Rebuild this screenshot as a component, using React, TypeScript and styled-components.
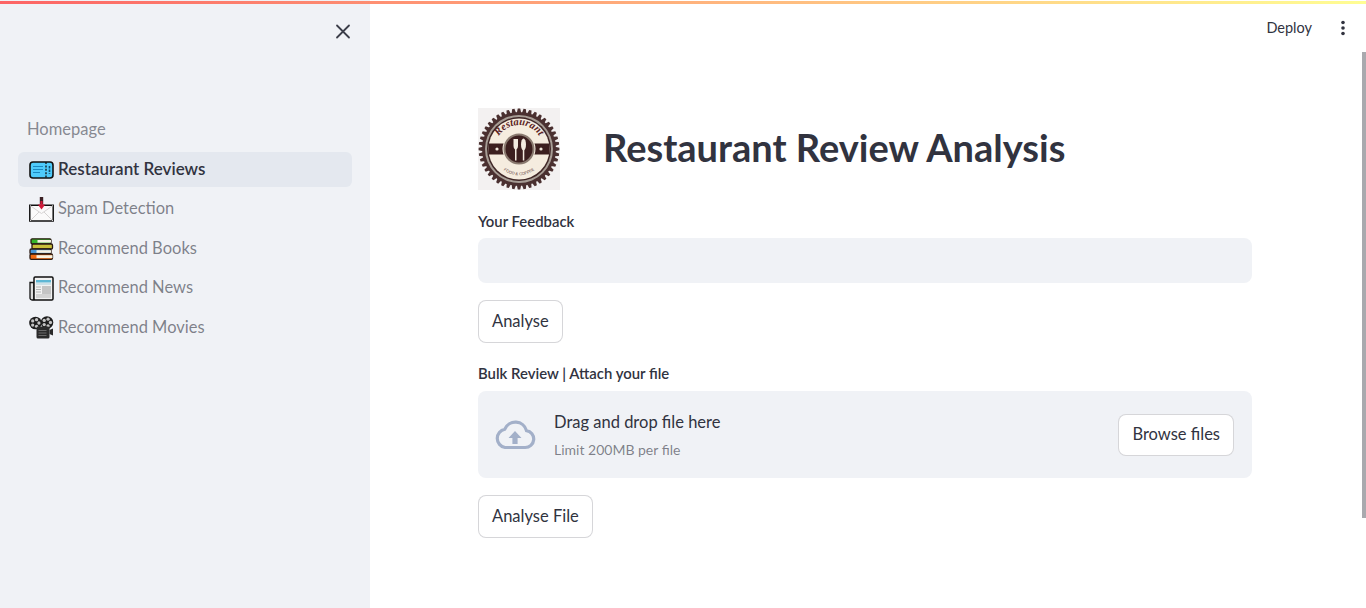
import React from "react";
import styled, { createGlobalStyle } from "styled-components";

const Global = createGlobalStyle`
  html, body { margin: 0; padding: 0; height: 100%; overflow: hidden; background: #fff; }
  * { box-sizing: border-box; }
  body { font-family: "Lato", "Noto Sans", "Liberation Sans", sans-serif; color: #31333f; }
`;

const Page = styled.div`
  position: relative;
  display: flex;
  width: 1366px;
  height: 608px;
  overflow: hidden;
`;
const Decoration = styled.div`
  position: absolute;
  top: 1px; left: 0; right: 0;
  height: 3px;
  z-index: 5;
  opacity: .85;
  background-image: linear-gradient(90deg, #ff4b4b, #fffd80);
`;
const Sidebar = styled.aside`
  flex: 0 0 370px;
  background: #f0f2f6;
  padding: 24px 18px 0;
  display: flex;
  flex-direction: column;
`;
const CloseRow = styled.div`
  display: flex;
  justify-content: flex-end;
  height: 93px;
`;
const CloseButton = styled.button`
  border: 0; background: none; padding: 0;
  width: 16px; height: 16px;
  margin-right: 1px;
  color: #3c3e4a;
  svg { display: block; }
`;
const NavTitle = styled.div`
  font-size: 16.5px;
  line-height: 24px;
  color: #31333f;
  opacity: .55;
  padding-left: 9px;
  margin-bottom: 11px;
`;
const Nav = styled.nav`
  display: flex;
  flex-direction: column;
  gap: 4.5px;
`;
const NavItem = styled.a<{ $active?: boolean }>`
  display: flex;
  align-items: center;
  gap: 3px;
  height: 35px;
  padding-left: 11px;
  border-radius: 6px;
  font-size: ${p => (p.$active ? "17px" : "16.5px")};
  font-weight: ${p => (p.$active ? 600 : 400)};
  color: ${p => (p.$active ? "#31333f" : "rgba(49,51,63,.6)")};
  background: ${p => (p.$active ? "#e4e8ef" : "transparent")};
  svg { flex: none; display: block; }
`;
const NavLabel = styled.span`
  position: relative;
  top: -1px;
  margin-left: 1px;
`;
const Main = styled.main`
  position: relative;
  flex: 1;
  display: flex;
  flex-direction: column;
`;
const Header = styled.header`
  display: flex;
  justify-content: flex-end;
  align-items: center;
  height: 56px;
  padding-right: 20px;
  gap: 28px;
  font-size: 14.5px;
  color: #31333f;
`;
const DeployLabel = styled.span`
  margin-top: -2px;
`;
const KebabIcon = styled.svg`
  display: block;
`;
const Scroll = styled.div`
  position: absolute;
  right: 0;
  top: 52px;
  width: 4px;
  height: 466px;
  background: #a9a9ae;
`;
const Content = styled.div`
  width: 774px;
  margin-left: 108px;
  padding-top: 52px;
  display: flex;
  flex-direction: column;
`;
const TitleRow = styled.div`
  display: flex;
  align-items: center;
  gap: 43px;
  margin-bottom: 22px;
`;
const Title = styled.h1`
  margin: 0 0 3px;
  font-size: 38px;
  font-weight: 700;
  line-height: 79px;
  color: #31333f;
`;
const Label = styled.label`
  display: block;
  font-size: 14.9px;
  font-weight: 600;
  line-height: 18px;
  margin-bottom: 8px;
`;
const Input = styled.div`
  height: 45px;
  background: #f0f2f6;
  border-radius: 8px;
  margin-bottom: 17px;
`;
const Button = styled.button`
  align-self: flex-start;
  height: 43px;
  padding: 0 13px 2px;
  background: #fff;
  border: 1px solid rgba(49,51,63,.2);
  border-radius: 8px;
  font: inherit;
  font-size: 16.5px;
  color: #31333f;
`;
const SpacedLabel = styled(Label)`
  margin-top: 21px;
  margin-bottom: 9px;
`;
const Dropzone = styled.div`
  display: flex;
  align-items: center;
  height: 87px;
  padding: 0 18px 0 16px;
  background: #f0f2f6;
  border-radius: 8px;
  margin-bottom: 17px;
`;
const DropText = styled.div`
  flex: 1;
  margin-left: 18px;
  display: flex;
  flex-direction: column;
  gap: 7px;
`;
const DropTitle = styled.span`
  font-size: 16.5px;
  line-height: 24px;
`;
const DropHint = styled.span`
  font-size: 14px;
  line-height: 18px;
  color: rgba(49,51,63,.6);
`;
const BrowseButton = styled(Button)`
  align-self: center;
  height: 42px;
`;

const Ticket = () => (
  <svg width="25" height="18" viewBox="0 0 25 18">
    <rect x="1" y="1" width="23" height="16" rx="3" fill="#4ecbfb" stroke="#111" strokeWidth="1.6" />
    <path d="M4 5.5h10M4 8.5h10M4 11.5h7" stroke="#1b88c0" strokeWidth="1.2" />
    <path d="M17 1v16" stroke="#111" strokeWidth="1.3" strokeDasharray="2 1.4" />
    <path d="M20.5 5v8" stroke="#0e4f74" strokeWidth="1.6" strokeDasharray="2.4 1.2" />
  </svg>
);
const Mail = () => (
  <svg width="25" height="25" viewBox="0 0 25 25">
    <path d="M.8 8.2h23.4v15.8H.8z" fill="#fbfafa" stroke="#111" strokeWidth="1.5" />
    <path d="M1 8.5l11.5 8 11.5-8M1 24l9-9M24 24l-9-9" fill="none" stroke="#d6d3d3" strokeWidth="1" />
    <path d="M10.8 0h3.4v7h-3.4z" fill="#3a2024" />
    <path d="M12.5 12.5L8.8 7.5h7.4z" fill="#d11a3a" />
    <path d="M11.4 4h2.2v5h-2.2z" fill="#d11a3a" />
  </svg>
);
const Book = ({ y, x, w, cover, h }: { y: number; x: number; w: number; cover: string; h: number }) => (
  <g>
    <rect x={x} y={y} width={w} height={h} rx="1.2" fill={cover} stroke="#2a1a12" strokeWidth="1.3" />
    <rect x={x + 6.5} y={y + 1.2} width={w - 6.5} height={h - 2.4} fill="#f6f2e2" />
  </g>
);
const Books = () => (
  <svg width="25" height="22" viewBox="0 0 25 22">
    <Book x={2} y={0.8} w={20} h={5} cover="#36b52a" />
    <rect x="3" y="6" width="20.5" height="5" rx="1.2" fill="#c9bf3a" stroke="#2a1a12" strokeWidth="1.3" />
    <Book x={1} y={11} w={21} h={5} cover="#4a96d6" />
    <Book x={1} y={16} w={22.5} h={5.3} cover="#f0690f" />
  </svg>
);
const News = () => (
  <svg width="25" height="25" viewBox="0 0 25 25">
    <path d="M1 6.5h4V24H3a2 2 0 0 1-2-2z" fill="#dcdcdc" stroke="#111" strokeWidth="1.3" />
    <rect x="5" y="1" width="19" height="23" rx="1.2" fill="#f2f2f2" stroke="#111" strokeWidth="1.5" />
    <path d="M7 4h15v2.5H7z" fill="#5fb7d4" />
    <path d="M7 8h15" stroke="#a9cfdc" strokeWidth="1" />
    <rect x="13" y="10" width="9" height="8" fill="#c4c4c4" />
    <path d="M7 11h5M7 13.5h5M7 16h5M7 19h15M7 21h15" stroke="#b4b4b4" strokeWidth="1" />
  </svg>
);
const Reel = ({ cx, cy, r }: { cx: number; cy: number; r: number }) => (
  <g>
    <circle cx={cx} cy={cy} r={r} fill="#1d1d1d" />
    {[0, 72, 144, 216, 288].map(a => {
      const t = (a * Math.PI) / 180;
      return <circle key={a} cx={cx + Math.cos(t) * r * 0.55} cy={cy + Math.sin(t) * r * 0.55} r={r * 0.26} fill="#c4c4c4" />;
    })}
  </g>
);
const Projector = () => (
  <svg width="25" height="23" viewBox="0 0 25 23">
    <Reel cx={6.5} cy={7} r={6.3} />
    <Reel cx={18} cy={6.5} r={6.3} />
    <rect x="7.5" y="10.5" width="13" height="12" rx="1.5" fill="#2a2a2a" />
    <path d="M9.5 14.5h8M9.5 17h8M9.5 19.5h8" stroke="#6a6a6a" strokeWidth="1" />
    <path d="M20.5 14l3.5-1.5v7L20.5 18z" fill="#2a2a2a" />
  </svg>
);

const teeth = Array.from({ length: 44 }, (_, i) => (i * 360) / 44);

const Logo = () => (
  <svg width="82" height="82" viewBox="0 0 82 82" style={{ flex: "none", display: "block" }}>
    <rect width="82" height="82" fill="#f3f1f1" />
    {teeth.map(a => (
      <path key={a} d="M38.8 5 L39.8 .6 H42.2 L43.2 5z" fill="#4a3030" transform={`rotate(${a} 41 41)`} />
    ))}
    <circle cx="41" cy="41" r="37" fill="#4a3030" />
    <circle cx="41" cy="41" r="34" fill="#a79d95" />
    <circle cx="41" cy="41" r="32" fill="#3f2626" />
    <circle cx="41" cy="41" r="30.5" fill="#f5ecdf" />
    <path d="M11 35.5h60a30.5 30.5 0 0 1 .5 5.5 30.5 30.5 0 0 1-.5 5.5H11a30.5 30.5 0 0 1-.5-5.5 30.5 30.5 0 0 1 .5-5.5z" fill="#3c1f1f" />
    <circle cx="19" cy="41" r="1.6" fill="#efe6da" />
    <circle cx="63" cy="41" r="1.6" fill="#efe6da" />
    <circle cx="41" cy="41" r="16.5" fill="#f5ecdf" />
    <circle cx="41" cy="41" r="14.5" fill="#3c1f1f" stroke="#8a7a70" strokeWidth="2" />
    <path d="M35.5 31v7q0 2.5 1.5 3.5v11h1.5v-11q1.5-1 1.5-3.5v-7z" fill="#f3ebe0" />
    <ellipse cx="45.5" cy="36.5" rx="2.5" ry="6" fill="#f3ebe0" />
    <path d="M44.8 40h1.5v12.5h-1.5z" fill="#f3ebe0" />
    <defs>
      <path id="logo-arc-top" d="M17 41 A24 24 0 0 1 65 41" />
      <path id="logo-arc-bottom" d="M19 55 A26 26 0 0 0 63 55" />
    </defs>
    <text fontFamily="Liberation Serif, serif" fontStyle="italic" fontWeight="700" fontSize="10.5" fill="#5b2323">
      <textPath href="#logo-arc-top" startOffset="50%" textAnchor="middle">Restaurant</textPath>
    </text>
    <text fontFamily="Liberation Sans, sans-serif" fontSize="4" fill="#5b3a3a">
      <textPath href="#logo-arc-bottom" startOffset="50%" textAnchor="middle">FOOD &amp; COFFEE</textPath>
    </text>
  </svg>
);

export default function App() {
  return (
    <Page>
      <Global />
      <Decoration />
      <Sidebar>
        <CloseRow>
          <CloseButton aria-label="Close">
            <svg width="16" height="16" viewBox="0 0 16 16">
              <path d="M2 1.5l12 12M14 1.5l-12 12" stroke="currentColor" strokeWidth="1.8" strokeLinecap="round" />
            </svg>
          </CloseButton>
        </CloseRow>
        <NavTitle>Homepage</NavTitle>
        <Nav>
          <NavItem $active><Ticket /><NavLabel>Restaurant Reviews</NavLabel></NavItem>
          <NavItem><Mail /><NavLabel>Spam Detection</NavLabel></NavItem>
          <NavItem><Books /><NavLabel>Recommend Books</NavLabel></NavItem>
          <NavItem><News /><NavLabel>Recommend News</NavLabel></NavItem>
          <NavItem><Projector /><NavLabel>Recommend Movies</NavLabel></NavItem>
        </Nav>
      </Sidebar>
      <Main>
        <Header>
          <DeployLabel>Deploy</DeployLabel>
          <KebabIcon width="6" height="16" viewBox="0 0 6 16">
            <circle cx="3" cy="2.5" r="1.8" fill="#31333f" />
            <circle cx="3" cy="8" r="1.8" fill="#31333f" />
            <circle cx="3" cy="13.5" r="1.8" fill="#31333f" />
          </KebabIcon>
        </Header>
        <Scroll />
        <Content>
          <TitleRow>
            <Logo />
            <Title>Restaurant Review Analysis</Title>
          </TitleRow>
          <Label>Your Feedback</Label>
          <Input />
          <Button>Analyse</Button>
          <SpacedLabel>Bulk Review | Attach your file</SpacedLabel>
          <Dropzone>
            <svg width="42" height="30" viewBox="0 0 42 30" style={{ flex: "none" }}>
              <path d="M11 27.5h20a8.5 8.5 0 0 0 1.5-16.9A11.5 11.5 0 0 0 10.8 9.2 9.3 9.3 0 0 0 11 27.5z" fill="none" stroke="#a3b0c9" strokeWidth="3.2" />
              <path d="M21 11l6.5 7H23.6v6h-5.2v-6h-3.9z" fill="#a3b0c9" />
            </svg>
            <DropText>
              <DropTitle>Drag and drop file here</DropTitle>
              <DropHint>Limit 200MB per file</DropHint>
            </DropText>
            <BrowseButton>Browse files</BrowseButton>
          </Dropzone>
          <Button>Analyse File</Button>
        </Content>
      </Main>
    </Page>
  );
}
